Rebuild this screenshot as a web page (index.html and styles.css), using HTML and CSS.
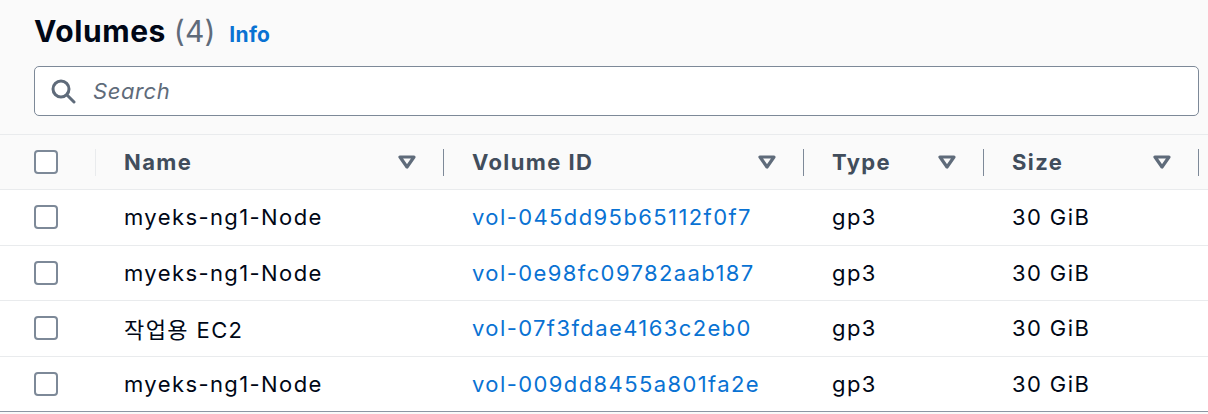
FILE: index.html
```html
<!DOCTYPE html>
<html lang="en">
<head>
    <meta charset="UTF-8">
    <meta name="viewport" content="width=device-width, initial-scale=1.0">
    <title>Volumes</title>
    <link rel="stylesheet" href="styles.css">
</head>
<body>
    <div class="panel">
        <div class="panel-header">
            <h1>Volumes <span class="count">(4)</span> <a href="#" class="info">Info</a></h1>
            <div class="search">
                <svg class="search-icon" width="26" height="26" viewBox="0 0 26 26">
                    <circle cx="11" cy="11" r="8" fill="none" stroke="#5f6b7a" stroke-width="3"/>
                    <line x1="17" y1="17" x2="24" y2="24" stroke="#5f6b7a" stroke-width="3" stroke-linecap="round"/>
                </svg>
                <input type="text" placeholder="Search">
            </div>
        </div>

        <div class="table">
            <div class="row head">
                <div class="cell check-cell">
                    <span class="checkbox"></span>
                    <span class="divider light"></span>
                </div>
                <div class="cell">
                    <span class="label">Name</span>
                    <svg class="sort" width="18" height="14" viewBox="0 0 18 14"><polygon points="2,2 16,2 9,12" /></svg>
                    <span class="divider"></span>
                </div>
                <div class="cell">
                    <span class="label">Volume ID</span>
                    <svg class="sort" width="18" height="14" viewBox="0 0 18 14"><polygon points="2,2 16,2 9,12" /></svg>
                    <span class="divider"></span>
                </div>
                <div class="cell">
                    <span class="label">Type</span>
                    <svg class="sort" width="18" height="14" viewBox="0 0 18 14"><polygon points="2,2 16,2 9,12" /></svg>
                    <span class="divider"></span>
                </div>
                <div class="cell">
                    <span class="label">Size</span>
                    <svg class="sort" width="18" height="14" viewBox="0 0 18 14"><polygon points="2,2 16,2 9,12" /></svg>
                    <span class="divider"></span>
                </div>
                <div class="cell"></div>
            </div>

            <div class="row">
                <div class="cell check-cell"><span class="checkbox"></span></div>
                <div class="cell">myeks-ng1-Node</div>
                <div class="cell"><a href="#">vol-045dd95b65112f0f7</a></div>
                <div class="cell">gp3</div>
                <div class="cell">30 GiB</div>
                <div class="cell"></div>
            </div>
            <div class="row">
                <div class="cell check-cell"><span class="checkbox"></span></div>
                <div class="cell">myeks-ng1-Node</div>
                <div class="cell"><a href="#">vol-0e98fc09782aab187</a></div>
                <div class="cell">gp3</div>
                <div class="cell">30 GiB</div>
                <div class="cell"></div>
            </div>
            <div class="row">
                <div class="cell check-cell"><span class="checkbox"></span></div>
                <div class="cell">작업용 EC2</div>
                <div class="cell"><a href="#">vol-07f3fdae4163c2eb0</a></div>
                <div class="cell">gp3</div>
                <div class="cell">30 GiB</div>
                <div class="cell"></div>
            </div>
            <div class="row last">
                <div class="cell check-cell"><span class="checkbox"></span></div>
                <div class="cell">myeks-ng1-Node</div>
                <div class="cell"><a href="#">vol-009dd8455a801fa2e</a></div>
                <div class="cell">gp3</div>
                <div class="cell">30 GiB</div>
                <div class="cell"></div>
            </div>
        </div>
    </div>
</body>
</html>
```

FILE: styles.css
```css
body {
    margin: 0;
    background-color: #fafafa;
    font-family: Inter, "Noto Sans CJK KR", sans-serif;
    color: #000716;
    overflow: hidden;
}
.panel {
    width: 1208px;
    overflow: hidden;
}
.panel-header {
    padding: 13px 9px 18px 34px;
}
h1 {
    margin: 0;
    font-size: 30px;
    line-height: 36px;
    font-weight: 700;
    letter-spacing: 0.6px;
}
.count {
    color: #5f6b7a;
    font-weight: 400;
    letter-spacing: 0.2px;
}
.info {
    margin-left: 6px;
    font-size: 21px;
    line-height: 20px;
    letter-spacing: 0.3px;
    color: #0972d3;
    text-decoration: none;
}
.search {
    display: flex;
    align-items: center;
    margin-top: 17px;
    height: 50px;
    box-sizing: border-box;
    padding-left: 15px;
    background-color: #fff;
    border: 1px solid #7d8998;
    border-radius: 5px;
}
.search-icon {
    margin-right: 17px;
}
.search input {
    flex: 1;
    border: none;
    outline: none;
    background: transparent;
    font-family: inherit;
    font-size: 22px;
    font-style: italic;
    letter-spacing: 0.6px;
    color: #000716;
    padding: 0;
}
.search input::placeholder {
    color: #5f6b7a;
}
.table {
    width: 1400px;
}
.row {
    display: grid;
    grid-template-columns: 96px 348px 360px 180px 215px 201px;
    height: 55.5px;
    box-sizing: border-box;
    background-color: #fff;
    border-bottom: 1px solid #e9ebed;
    font-size: 22px;
    letter-spacing: 1.4px;
}
.row.head {
    height: 56px;
    background-color: #fafafa;
    border-top: 1px solid #e9ebed;
    font-weight: 700;
    color: #414d5c;
}
.row.last {
    border-bottom-color: #8c96a3;
}
.cell {
    display: flex;
    align-items: center;
    padding-left: 28px;
    white-space: nowrap;
}
.check-cell {
    padding-left: 34px;
}
.label {
    flex: 1;
}
.check-cell .checkbox {
    margin-right: auto;
}
.checkbox {
    width: 24px;
    height: 24px;
    box-sizing: border-box;
    border: 2px solid #7d8998;
    border-radius: 4px;
    background-color: #fff;
}
.sort polygon {
    fill: none;
    stroke: #5f6b7a;
    stroke-width: 3.2;
    stroke-linejoin: round;
}
.divider {
    width: 1px;
    height: 27px;
    margin-left: 27px;
    background-color: #7d8998;
}
.divider.light {
    background-color: #e9ebed;
}
a {
    color: #0972d3;
    text-decoration: none;
}
```
